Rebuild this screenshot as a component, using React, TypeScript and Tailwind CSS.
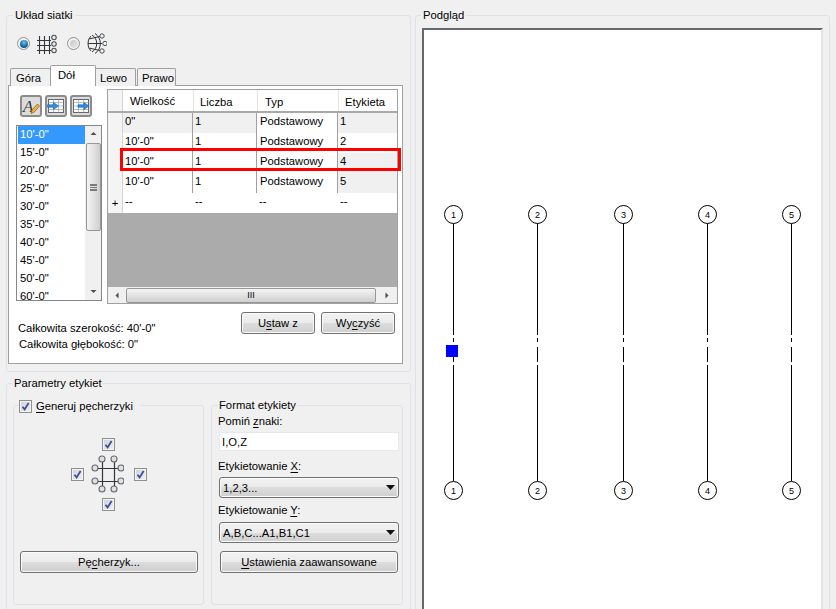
import { ReactNode } from 'react'

const btn =
  'flex items-center justify-center rounded-[3px] border border-[#707070] bg-[linear-gradient(#f2f2f2_0%,#ebebeb_50%,#dddddd_50%,#cfcfcf_100%)] shadow-[inset_0_0_0_1px_#fbfbfb]'

const toolBtn = 'flex h-[22px] w-[22px] items-center justify-center rounded-[3px] border-2 border-[#8c8c8c] bg-[#dcdcdc]'

const sizes = ['10\'-0"', '15\'-0"', '20\'-0"', '25\'-0"', '30\'-0"', '35\'-0"', '40\'-0"', '45\'-0"', '50\'-0"', '60\'-0"']

const rows = [
  { size: '0"', label: '1', gray: [true, true, false, true] },
  { size: '10\'-0"', label: '2', gray: [false, false, false, false] },
  { size: '10\'-0"', label: '4', gray: [false, false, false, true] },
  { size: '10\'-0"', label: '5', gray: [false, false, false, true] },
]

function Radio({ checked }: { checked?: boolean }) {
  return (
    <span className="flex h-[13px] w-[13px] shrink-0 items-center justify-center rounded-full border border-[#8e8f8f] bg-[#f4f4f4]">
      <span
        className={`h-[8px] w-[8px] rounded-full ${
          checked
            ? 'bg-[radial-gradient(circle_at_50%_30%,#6cc0f0,#0b5a94_70%,#04395f)]'
            : 'bg-[linear-gradient(135deg,#c4c4c4,#ebebeb)]'
        }`}
      />
    </span>
  )
}

function Check() {
  return (
    <span className="flex h-[13px] w-[13px] shrink-0 items-center justify-center border border-[#8e8f8f] bg-[linear-gradient(135deg,#cfd2da,#f0f0f2)] shadow-[inset_0_0_0_1px_#f4f4f4]">
      <svg width="9" height="9" viewBox="0 0 9 9">
        <path d="M1.5 4.8 L3.6 7.4 L7.6 1" fill="none" stroke="#3f4f96" strokeWidth="1.8" />
      </svg>
    </span>
  )
}

function U({ children }: { children: ReactNode }) {
  return <span className="underline underline-offset-2">{children}</span>
}

function Arrow({ dir }: { dir: 'up' | 'down' | 'left' | 'right' }) {
  const d = {
    up: 'M0.5 4 L3.5 1 L6.5 4 Z',
    down: 'M0.5 2 L6.5 2 L3.5 5 Z',
    left: 'M4.5 0.5 L4.5 6.5 L1.5 3.5 Z',
    right: 'M2.5 0.5 L2.5 6.5 L5.5 3.5 Z',
  }[dir]
  return (
    <svg width="7" height="7" viewBox="0 0 7 7">
      <path d={d} fill="#4d4d4d" />
    </svg>
  )
}

function GridIcon() {
  return (
    <svg width="20" height="20" viewBox="0 0 20 20" fill="none" stroke="#33373c" strokeWidth="1.1">
      <path d="M0 6.5 H14 M0 11.5 H14 M0 16.5 H14 M2.5 2 V20 M7.5 2 V20 M12.5 2 V20" />
      <circle cx="17" cy="3.5" r="2.2" stroke="#4a4f56" fill="#f0f0f0" />
      <circle cx="17" cy="10" r="2.2" stroke="#4a4f56" fill="#f0f0f0" />
      <circle cx="17" cy="16.5" r="2.2" stroke="#4a4f56" fill="#f0f0f0" />
    </svg>
  )
}

function RadialIcon() {
  return (
    <svg width="20" height="21" viewBox="0 0 20 21" fill="none" stroke="#33373c" strokeWidth="1">
      <path d="M1 10.5 H15 M2 6 L13 3.5 M2 15 L13 17.5 M8 0.5 A 12 12 0 0 1 8 20.5 M5 2 A 10 10 0 0 1 5 19 M1 10.5 A 9 9 0 0 1 4 3 M1 10.5 A 9 9 0 0 0 4 18" />
      <circle cx="15" cy="3" r="2.2" stroke="#4a4f56" fill="#f0f0f0" />
      <circle cx="18" cy="10.5" r="2.2" stroke="#4a4f56" fill="#f0f0f0" />
      <circle cx="15" cy="18" r="2.2" stroke="#4a4f56" fill="#f0f0f0" />
    </svg>
  )
}

function LabelEditIcon() {
  return (
    <svg width="18" height="18" viewBox="0 0 18 18">
      <text x="1" y="15" fontSize="17" fontStyle="italic" fontFamily="Liberation Serif" fill="#3a3a3a">A</text>
      <path d="M9 16.5 L10 13 L15.5 7 L17.5 9 L12 15.3 Z" fill="#f0b040" stroke="#8a5a10" strokeWidth="0.7" />
    </svg>
  )
}

function MoveIcon({ flip }: { flip?: boolean }) {
  return (
    <svg width="18" height="16" viewBox="0 0 18 16">
      <rect x="1.5" y="1.5" width="15" height="13" fill="#fff" stroke="#5f6670" />
      <path d="M1.5 4.5 H16.5 M1.5 8 H16.5 M1.5 11.5 H16.5 M6.5 1.5 V14.5 M11.5 1.5 V14.5" stroke="#9aa0a8" strokeWidth="0.7" />
      <path
        d={flip ? 'M6 6.8 H12 V4.5 L17 8 L12 11.5 V9.2 H6 Z' : 'M0.5 6.8 H6.5 V4.5 L11.5 8 L6.5 11.5 V9.2 H0.5 Z'}
        fill="#2f8fe0"
        stroke="#1a5fa8"
        strokeWidth="0.6"
      />
    </svg>
  )
}

function BubblesIcon() {
  const circles = [
    [11, 4], [23, 4], [4, 13], [4, 26], [30, 13], [30, 26], [11, 34], [23, 34],
  ]
  return (
    <svg width="33" height="38" viewBox="0 0 33 38" fill="none">
      <path d="M6 13.5 H28 M6 26.5 H28 M11.5 6 V32 M23.5 6 V32" stroke="#33373c" strokeWidth="1.2" />
      {circles.map(([cx, cy]) => (
        <circle key={`${cx}-${cy}`} cx={cx} cy={cy} r="3" fill="#e0e0e0" stroke="#666b72" strokeWidth="1.1" />
      ))}
    </svg>
  )
}

function ListBox() {
  return (
    <div className="ml-[7px] mt-[8px] flex h-[176px] w-[86px] border border-[#828790] bg-white">
      <div className="w-[68px] pl-[1px]">
        {sizes.map((s, i) => (
          <div key={s} className={`flex h-[18px] items-center pb-[2px] pl-[2px] ${i === 0 ? 'bg-[#3399ff] text-white' : ''}`}>{s}</div>
        ))}
      </div>
      <div className="flex w-[16px] flex-col items-center bg-[#f0f0f0]">
        <div className="flex h-[17px] items-center"><Arrow dir="up" /></div>
        <div className="flex h-[88px] w-[15px] items-center justify-center rounded-[2px] border border-[#979797] bg-[linear-gradient(90deg,#f4f4f4,#cfcfcf)]">
          <div className="h-[7px] w-[7px] border-y border-[#7a7a7a] bg-[linear-gradient(#7a7a7a_1px,transparent_1px)] bg-[length:100%_2px]" />
        </div>
        <div className="flex-1" />
        <div className="flex h-[17px] items-center"><Arrow dir="down" /></div>
      </div>
    </div>
  )
}

function DataGrid() {
  const cols = 'grid grid-cols-[15px_70px_64px_81px_59px]'
  const cell = 'flex items-center border-r border-b border-[#a0a0a0] pb-[4px] pl-[2px]'
  return (
    <div className="relative mt-[3px] flex h-[215px] w-[291px] flex-col border border-[#a0a0a0] bg-[#ababab]">
      <div className={`${cols} h-[23px] border-b-2 border-[#a9a9a9] bg-white`}>
        <div className="border-r border-[#d5d5d5] bg-[#f4f4f4]" />
        <div className="pl-[7px] pt-[3px]">Wielkość</div>
        <div className="border-l border-[#e4e4e4] pl-[6px] pt-[4px]">Liczba</div>
        <div className="border-l border-[#e4e4e4] pl-[7px] pt-[4px]">Typ</div>
        <div className="border-l border-[#e4e4e4] pl-[6px] pt-[4px]">Etykieta</div>
      </div>
      {rows.map((r) => (
        <div key={r.label} className={`${cols} h-[20px]`}>
          <div className="border-r border-b border-[#d5d5d5] bg-[#f4f4f4]" />
          <div className={`${cell} ${r.gray[0] ? 'bg-[#f0f0f0]' : 'bg-white'}`}>{r.size}</div>
          <div className={`${cell} ${r.gray[1] ? 'bg-[#f0f0f0]' : 'bg-white'}`}>1</div>
          <div className={`${cell} bg-white !pl-[3px]`}>Podstawowy</div>
          <div className={`${cell} border-r-0 ${r.gray[3] ? 'bg-[#f0f0f0]' : 'bg-white'}`}>{r.label}</div>
        </div>
      ))}
      <div className={`${cols} h-[20px] bg-white`}>
        <div className="flex items-center justify-center border-r border-[#d5d5d5] bg-[#f4f4f4]">+</div>
        <div className="pl-[2px]">--</div>
        <div className="pl-[2px]">--</div>
        <div className="pl-[2px]">--</div>
        <div className="pl-[2px]">--</div>
      </div>
      <div className="flex-1" />
      <div className="flex h-[16px] items-center bg-[#f0f0f0]">
        <div className="flex w-[18px] justify-center"><Arrow dir="left" /></div>
        <div className="flex h-[15px] w-[250px] items-center justify-center rounded-[2px] border border-[#979797] bg-[linear-gradient(#f4f4f4,#cfcfcf)] text-[9px] leading-none">III</div>
        <div className="flex flex-1 justify-center"><Arrow dir="right" /></div>
      </div>
      {/* red highlight round the third row */}
      <div className="absolute left-[12px] top-[58px] h-[23px] w-[281px] border-[3px] border-[#ff0000]" />
    </div>
  )
}

function Preview() {
  const xs = [29, 113, 199, 283, 367]
  return (
    <svg width="397" height="579" className="block">
      {xs.map((x, i) => (
        <g key={x}>
          <path d={`M${x}.5 193 V305 M${x}.5 308 V312 M${x}.5 317 V332 M${x}.5 335 V451`} stroke="#000" fill="none" />
          <circle cx={x + 0.5} cy={184.5} r="9" fill="#fff" stroke="#000" />
          <circle cx={x + 0.5} cy={460.5} r="9" fill="#fff" stroke="#000" />
          <text x={x + 0.5} y={188} fontSize="9" textAnchor="middle" fontFamily="Liberation Sans">{i + 1}</text>
          <text x={x + 0.5} y={464} fontSize="9" textAnchor="middle" fontFamily="Liberation Sans">{i + 1}</text>
        </g>
      ))}
      <rect x="22" y="315" width="12" height="12" fill="#0000ff" />
    </svg>
  )
}

export default function App() {
  return (
    <div className="flex h-[609px] w-[836px] overflow-hidden bg-[#f0f0f0] font-['Liberation_Sans',sans-serif] text-[11.25px] leading-[16px] text-black">
      {/* Left column */}
      <div className="ml-[6px] flex w-[405px] shrink-0 flex-col">
        <fieldset className="mt-[8px] h-[364px] shrink-0 rounded-[3px] border border-[#dce2e7]">
          <legend className="ml-[6px] h-[14px] px-[2px] leading-[14px]">Układ siatki</legend>
          <div className="mt-[11px] flex h-[21px] items-center pl-[10px]">
            <Radio checked />
            <div className="ml-[7px]"><GridIcon /></div>
            <div className="ml-[10px]"><Radio /></div>
            <div className="ml-[7px]"><RadialIcon /></div>
          </div>
          <div className="relative z-10 ml-[3px] mt-[11px] flex h-[21px] items-end">
            <div className="-mr-px flex h-[18px] w-[41px] items-center rounded-t-[2px] border border-b-0 border-[#a0a0a0] bg-[#f0f0f0] pl-[5px]">Góra</div>
            <div className="flex h-[21px] w-[46px] items-center rounded-t-[2px] border border-b-0 border-[#a0a0a0] bg-white pb-[2px] pl-[7px]">Dół</div>
            <div className="-ml-px flex h-[18px] w-[41px] items-center rounded-t-[2px] border border-b-0 border-[#a0a0a0] bg-[#f0f0f0] pl-[4px]">Lewo</div>
            <div className="ml-[1px] flex h-[18px] w-[39px] items-center rounded-t-[2px] border border-b-0 border-[#a0a0a0] bg-[#f0f0f0] pl-[4px]">Prawo</div>
          </div>
          <div className="ml-[1px] -mt-px h-[279px] w-[395px] border border-[#a0a0a0] bg-white">
            <div className="flex">
              <div className="w-[98px] shrink-0 pt-[9px]">
                <div className="ml-[11px] flex gap-[3px]">
                  <div className={toolBtn}><LabelEditIcon /></div>
                  <div className={toolBtn}><MoveIcon /></div>
                  <div className={toolBtn}><MoveIcon flip /></div>
                </div>
                <ListBox />
              </div>
              <DataGrid />
            </div>
            <div className="flex">
              <div className="pl-[9px] pt-[16px]">
                <div>Całkowita szerokość: 40'-0"</div>
                <div className="pl-[1px]">Całkowita głębokość: 0"</div>
              </div>
              <div className="ml-auto mr-[7px] flex gap-[6px] pt-[8px]">
                <div className={`${btn} h-[22px] w-[74px]`}><span>U<U>s</U>taw z</span></div>
                <div className={`${btn} h-[22px] w-[74px]`}><span>Wy<U>c</U>zyść</span></div>
              </div>
            </div>
          </div>
        </fieldset>

        <fieldset className="mt-[4px] h-[240px] shrink-0 rounded-[3px] border border-[#dce2e7]">
          <legend className="ml-[6px] h-[14px] px-[1px] leading-[14px]">Parametry etykiet</legend>
          <div className="mt-[8px] flex">
            <fieldset className="ml-[6px] h-[207px] w-[191px] rounded-[3px] border border-[#dce2e7]">
              <legend className="ml-[5px] flex h-[14px] items-center gap-[4px] pr-[7px] pt-[2px] leading-[14px]">
                <Check />
                <span><U>G</U>eneruj pęcherzyki</span>
              </legend>
              <div className="flex flex-col items-center pt-[26px]">
                <Check />
                <div className="mt-[4px] flex h-[38px] items-center">
                  <Check />
                  <div className="ml-[7px] mr-[10px]"><BubblesIcon /></div>
                  <Check />
                </div>
                <div className="mt-[5px]"><Check /></div>
              </div>
              <div className={`${btn} ml-[6px] mt-[40px] h-[22px] w-[178px]`}>
                <span>Pę<U>c</U>herzyk...</span>
              </div>
            </fieldset>
            <fieldset className="ml-[7px] h-[207px] w-[192px] rounded-[3px] border border-[#dce2e7]">
              <legend className="ml-[6px] h-[14px] px-[1px] leading-[14px]">Format etykiety</legend>
              <div className="ml-[6px] mt-[1px]">Pomiń <U>z</U>naki:</div>
              <div className="ml-[7px] mt-[3px] flex h-[19px] w-[180px] items-center border border-[#e3e9ef] bg-white pl-[2px]">I,O,Z</div>
              <div className="ml-[6px] mt-[7px]">Etykietowanie <U>X</U>:</div>
              <div className={`${btn} ml-[7px] mt-[3px] h-[21px] w-[180px] !justify-between px-[3px]`}>
                <span>1,2,3...</span>
                <svg width="9" height="5" viewBox="0 0 9 5"><path d="M0 0 H9 L4.5 5 Z" fill="#111" /></svg>
              </div>
              <div className="ml-[6px] mt-[4px]">Etykietowanie <U>Y</U>:</div>
              <div className={`${btn} ml-[7px] mt-[4px] h-[21px] w-[180px] !justify-between px-[3px]`}>
                <span>A,B,C...A1,B1,C1</span>
                <svg width="9" height="5" viewBox="0 0 9 5"><path d="M0 0 H9 L4.5 5 Z" fill="#111" /></svg>
              </div>
              <div className={`${btn} ml-[8px] mt-[8px] h-[22px] w-[178px]`}>
                <span><U>U</U>stawienia zaawansowane</span>
              </div>
            </fieldset>
          </div>
        </fieldset>
      </div>

      {/* Right column */}
      <fieldset className="ml-[4px] mt-[8px] h-[640px] w-[415px] shrink-0 rounded-[3px] border border-[#dce2e7]">
        <legend className="ml-[5px] h-[14px] px-[2px] leading-[14px]">Podgląd</legend>
        <div className="ml-[6px] mt-[6px] h-[600px] w-[401px] border-l-2 border-r-2 border-t-2 border-l-[#696969] border-r-[#e3e3e3] border-t-[#696969] bg-white">
          <Preview />
        </div>
      </fieldset>
    </div>
  )
}
